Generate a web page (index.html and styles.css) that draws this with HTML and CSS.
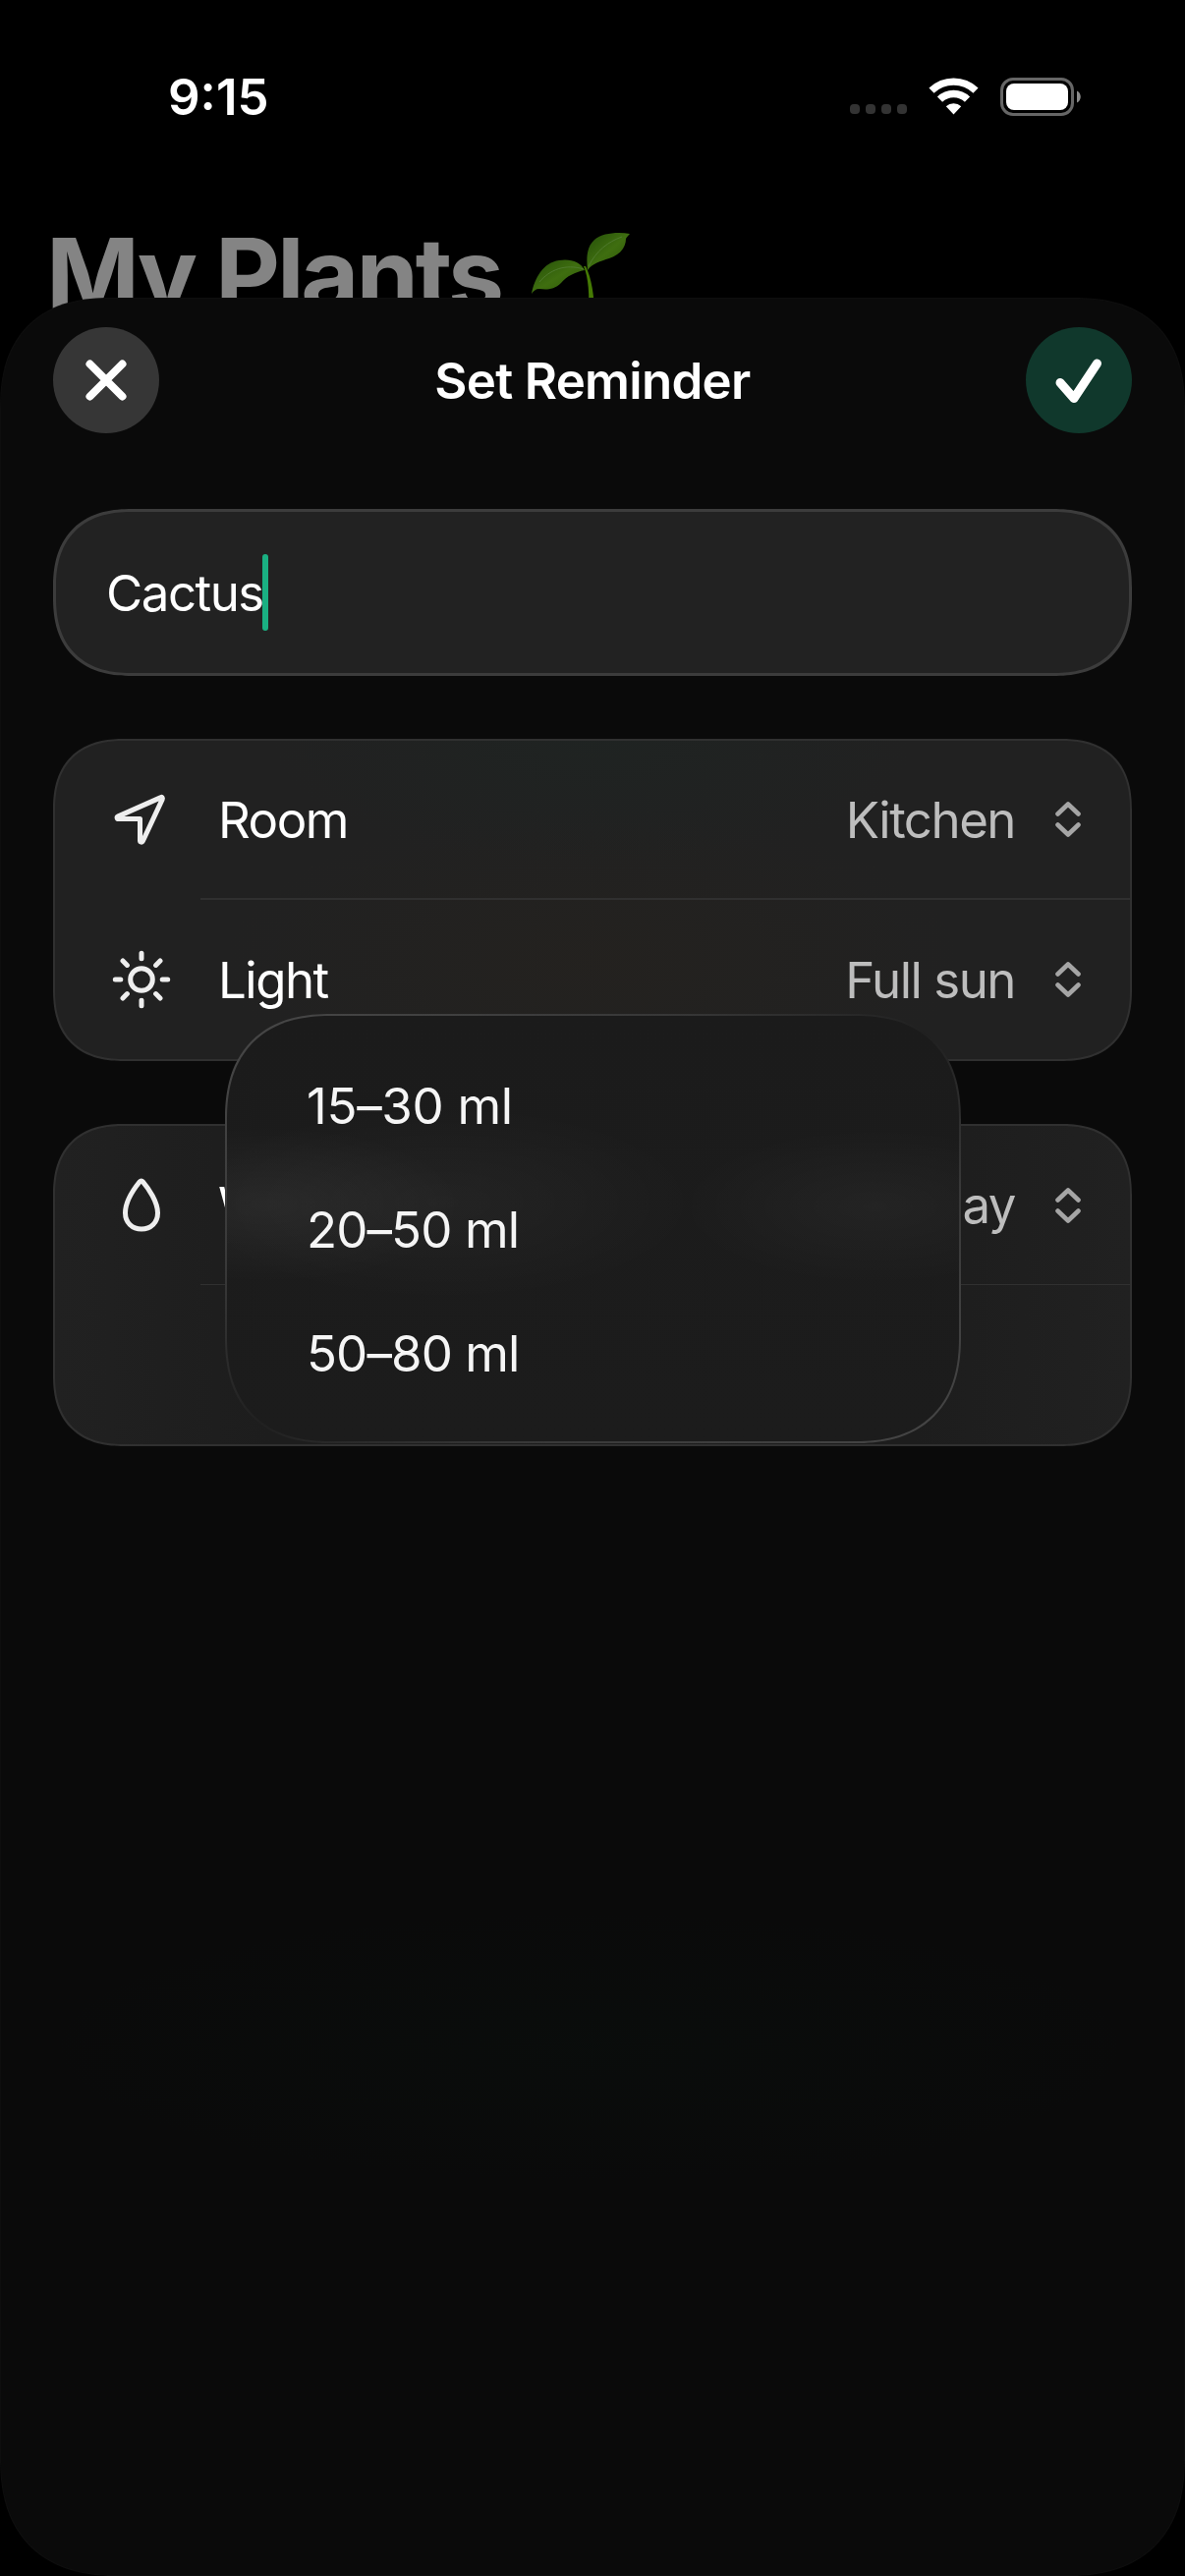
FILE: index.html
```html
<!DOCTYPE html>
<html lang="en">
<head>
<meta charset="utf-8">
<title>Set Reminder</title>
<link rel="stylesheet" href="styles.css">
</head>
<body>
<div class="screen">
  <header class="status">
    <span class="status-time">9:15</span>
    <div class="status-icons">
      <span class="signal"><i></i><i></i><i></i><i></i></span>
      <svg class="wifi" viewBox="0 0 51 38" width="51" height="38">
        <g fill="none" stroke="#fff" stroke-width="7.4">
          <path d="M3 13.2A32.5 32.5 0 0 1 48 13.2"/>
          <path d="M11.5 22.2A20 20 0 0 1 39.5 22.2"/>
        </g>
        <path d="M17.8 29.2A11.2 11.2 0 0 1 33.2 29.2L25.5 37.4Z" fill="#fff"/>
      </svg>
      <svg class="battery" viewBox="0 0 83 39" width="83" height="39">
        <rect x="1.5" y="1.5" width="72" height="36" rx="11.5" fill="none" stroke="#666" stroke-width="3"/>
        <rect x="6" y="6" width="63" height="27" rx="8" fill="#fff"/>
        <path d="M78 13.5c5 2 5 10 0 12z" fill="#8c8c8c"/>
      </svg>
    </div>
  </header>

  <div class="page-title">
    <h1>My Plants</h1>
    <svg class="sprout" viewBox="0 0 102 86" width="102" height="86">
      <defs>
        <linearGradient id="leaf" x1="0" y1="0" x2="1" y2="1">
          <stop offset="0" stop-color="#234d08"/><stop offset=".5" stop-color="#3f6e10"/><stop offset="1" stop-color="#2a5606"/>
        </linearGradient>
      </defs>
      <path d="M53 34c5 12 6 28 5 52h6c0-22-3-40-9-52z" fill="#457a04"/>
      <path d="M0 62C3 46 12 30 28 28C40 26 50 30 54 38C44 40 36 44 30 51C23 58 15 58 8 57C4 57 2 59 0 62Z" fill="url(#leaf)"/>
      <path d="M100 1C88-1 72 0 64 7C55 15 56 28 57 38C62 31 70 29 79 26C91 22 96 14 96 6C97 4 99 2 100 1Z" fill="url(#leaf)"/>
      <path d="M8 50C18 38 34 31 53 37M58 34C66 18 78 9 92 4" fill="none" stroke="#4f7a2e" stroke-width="1"/>
    </svg>
  </div>

  <main class="sheet">
    <div class="sheet-bar">
      <button class="round close" aria-label="Close">
        <svg viewBox="0 0 108 108" width="108" height="108"><path d="M37.500 37.500l33 33M70.500 37.500l-33 33" stroke="#fff" stroke-width="8" stroke-linecap="round"/></svg>
      </button>
      <h2>Set Reminder</h2>
      <button class="round confirm" aria-label="Save">
        <svg viewBox="0 0 108 108" width="108" height="108"><path d="M35 56.500L49 72.500L72.500 37" fill="none" stroke="#fff" stroke-width="9" stroke-linecap="round" stroke-linejoin="round"/></svg>
      </button>
    </div>

    <div class="field"><span>Cactus</span><i class="caret"></i></div>

    <section class="card card-place">
      <div class="row">
        <svg class="icon" viewBox="0 0 60 60" width="60" height="60"><path d="M49.800 6.600L5.800 26.100C4.600 26.800 5 28.600 6.500 28.600H28.500V50.500C28.500 52.400 30.600 52.600 31.300 51.200L51.200 8.600C51.800 7.200 51 6 49.800 6.600Z"/></svg>
        <div class="row-body"><span>Room</span><span class="value">Kitchen</span>
        <svg class="updown" viewBox="0 0 26 36" width="26" height="36"><path d="M2.500 12.500L13 2.500L23.500 12.500M2.500 23.500L13 33.500L23.500 23.500"/></svg></div>
      </div>
      <div class="row">
        <svg class="icon" viewBox="0 0 60 60" width="60" height="60"><circle cx="30" cy="30" r="11.300"/><path d="M30 3.300v5.500M30 51.200v5.500M3.300 30h5.500M51.200 30h5.500M11 11l4.400 4.400M44.600 44.600l4.400 4.400M49 11l-4.400 4.400M15.400 44.600l-4.400 4.400"/></svg>
        <div class="row-body"><span>Light</span><span class="value">Full sun</span>
        <svg class="updown" viewBox="0 0 26 36" width="26" height="36"><path d="M2.500 12.500L13 2.500L23.500 12.500M2.500 23.500L13 33.500L23.500 23.500"/></svg></div>
      </div>
    </section>

    <section class="card card-water">
      <div class="row">
        <svg class="icon" viewBox="0 0 60 60" width="60" height="60"><path d="M28.200 5.800C22 13.500 13.500 26.500 13.500 37.500C13.500 47.500 20.500 54 30 54S46.500 47.500 46.500 37.500C46.500 26.500 37.500 13 31.400 5.800C30.400 4.600 29.200 4.600 28.200 5.800Z"/></svg>
        <div class="row-body"><span>Watering day</span><span class="value">Saturday</span>
        <svg class="updown" viewBox="0 0 26 36" width="26" height="36"><path d="M2.500 12.500L13 2.500L23.500 12.500M2.500 23.500L13 33.500L23.500 23.500"/></svg></div>
      </div>
      <div class="row"></div>
      <ul class="menu">
        <li>15–30 ml</li>
        <li>20–50 ml</li>
        <li>50–80 ml</li>
      </ul>
    </section>
  </main>
</div>
</body>
</html>
```
FILE: styles.css
```css
* { box-sizing: border-box; }

body {
  margin: 0;
  background: #000;
  color: #fff;
  font-family: Inter, "Liberation Sans", sans-serif;
  font-size: 51px;
  letter-spacing: -1.5px;
}

h1, h2, ul { margin: 0; padding: 0; }

.screen {
  width: 1206px;
  height: 2622px;
  display: flex;
  flex-direction: column;
  overflow: hidden;
}

.status {
  height: 196px;
  flex: none;
  padding: 0 105px 0 171px;
  display: flex;
  justify-content: space-between;
  align-items: center;
}

.status-time { font-weight: 600; font-size: 51px; letter-spacing: 0; }

.status-icons { display: flex; align-items: center; }

.signal { display: flex; gap: 6px; margin-right: 22px; padding-top: 26px; }
.signal i { width: 10px; height: 10px; border-radius: 4px; background: #333; }

.wifi { margin-right: 22px; }

.page-title {
  height: 107px;
  flex: none;
  padding: 41px 0 0 47px;
  display: flex;
  gap: 31px;
  align-items: flex-start;
}

.page-title h1 {
  margin-top: -20px;
  font-size: 102px;
  line-height: 124px;
  font-weight: 700;
  letter-spacing: -3.2px;
  color: #848484;
  white-space: nowrap;
}

.sprout { flex: none; }

.sheet {
  flex: 1;
  padding: 30px 54px;
  border-radius: 112px 112px 120px 120px;
  corner-shape: superellipse(1.25);
  background:
    radial-gradient(ellipse 560px 140px at 600px 1780px, rgba(0, 60, 40, .05), transparent),
    #0a0a0a;
  box-shadow: inset 0 0 0 1px #0e0e0e;
}

.sheet-bar {
  display: flex;
  justify-content: space-between;
  align-items: center;
  margin-bottom: 77px;
}

.sheet-bar h2 { font-size: 51px; font-weight: 600; letter-spacing: -.7px; }

.round {
  width: 108px;
  height: 108px;
  padding: 0;
  border: 0;
  border-radius: 50%;
}
.round svg { display: block; }
.close { background: #363636; }
.confirm { background: #10382c; }

.field {
  height: 170px;
  margin-bottom: 64px;
  padding-left: 51px;
  display: flex;
  align-items: center;
  border: 3px solid #3c3c3c;
  border-radius: 80px;
  corner-shape: superellipse(1.25);
  background: #222;
}

.caret {
  width: 6px;
  height: 78px;
  margin-left: -1px;
  border-radius: 3px;
  background: #1ab082;
}

.card {
  height: 328px;
  position: relative;
  display: flex;
  flex-direction: column;
  border: 2px solid #303030;
  border-radius: 72px;
  corner-shape: superellipse(1.25);
}

.card-place {
  margin-bottom: 64px;
  background:
    radial-gradient(ellipse 330px 130px at 50% 0, rgba(20, 50, 40, .14), transparent),
    radial-gradient(ellipse 380px 160px at 50% 70%, rgba(60, 40, 15, .1), transparent),
    #212121;
}

.card-water {
  background: linear-gradient(90deg, #212121, #1d1d1d 20%, #1d1d1d 80%, #212121);
}

.row {
  flex: 1;
  display: flex;
  align-items: center;
  padding-left: 58px;
}

.icon {
  flex: none;
  margin-right: 30px;
  fill: none;
  stroke: #eee;
  stroke-width: 5px;
  stroke-linecap: round;
  stroke-linejoin: round;
}

.row-body {
  flex: 1;
  align-self: stretch;
  display: flex;
  align-items: center;
  padding: 0 50px 0 18px;
  border-bottom: 2px solid #303030;
}
.row:last-of-type .row-body { border-bottom: 0; }
.card-water .row-body { border-bottom: 1px solid #303030; }

.value { margin-left: auto; margin-right: 41px; color: #bdbdbd; }

.updown path {
  fill: none;
  stroke: #a5a5a5;
  stroke-width: 4.600px;
  stroke-linecap: round;
  stroke-linejoin: round;
}

.menu {
  position: absolute;
  left: 173px;
  top: -114px;
  width: 749px;
  height: 437px;
  padding: 28px 0 0 81px;
  list-style: none;
  border: 2px solid transparent;
  border-radius: 108px;
  corner-shape: superellipse(1.25);
  background:
    radial-gradient(ellipse 200px 80px at 40px 192px, rgba(255, 255, 255, .05), transparent) padding-box,
    radial-gradient(ellipse 260px 100px at 220px 190px, rgba(255, 255, 255, .035), transparent) padding-box,
    radial-gradient(ellipse 200px 80px at 660px 194px, rgba(255, 255, 255, .035), transparent) padding-box,
    linear-gradient(#1b1b1b, #1c1c1c) padding-box,
    linear-gradient(to bottom right, #484848, #383838 30%, #202020 50%, #383838 70%, #464646) border-box;
  color: #f5f5f5;
  letter-spacing: -.9px;
}
.menu li { height: 126px; display: flex; align-items: center; }
.menu li:first-child { letter-spacing: -.3px; }
```
